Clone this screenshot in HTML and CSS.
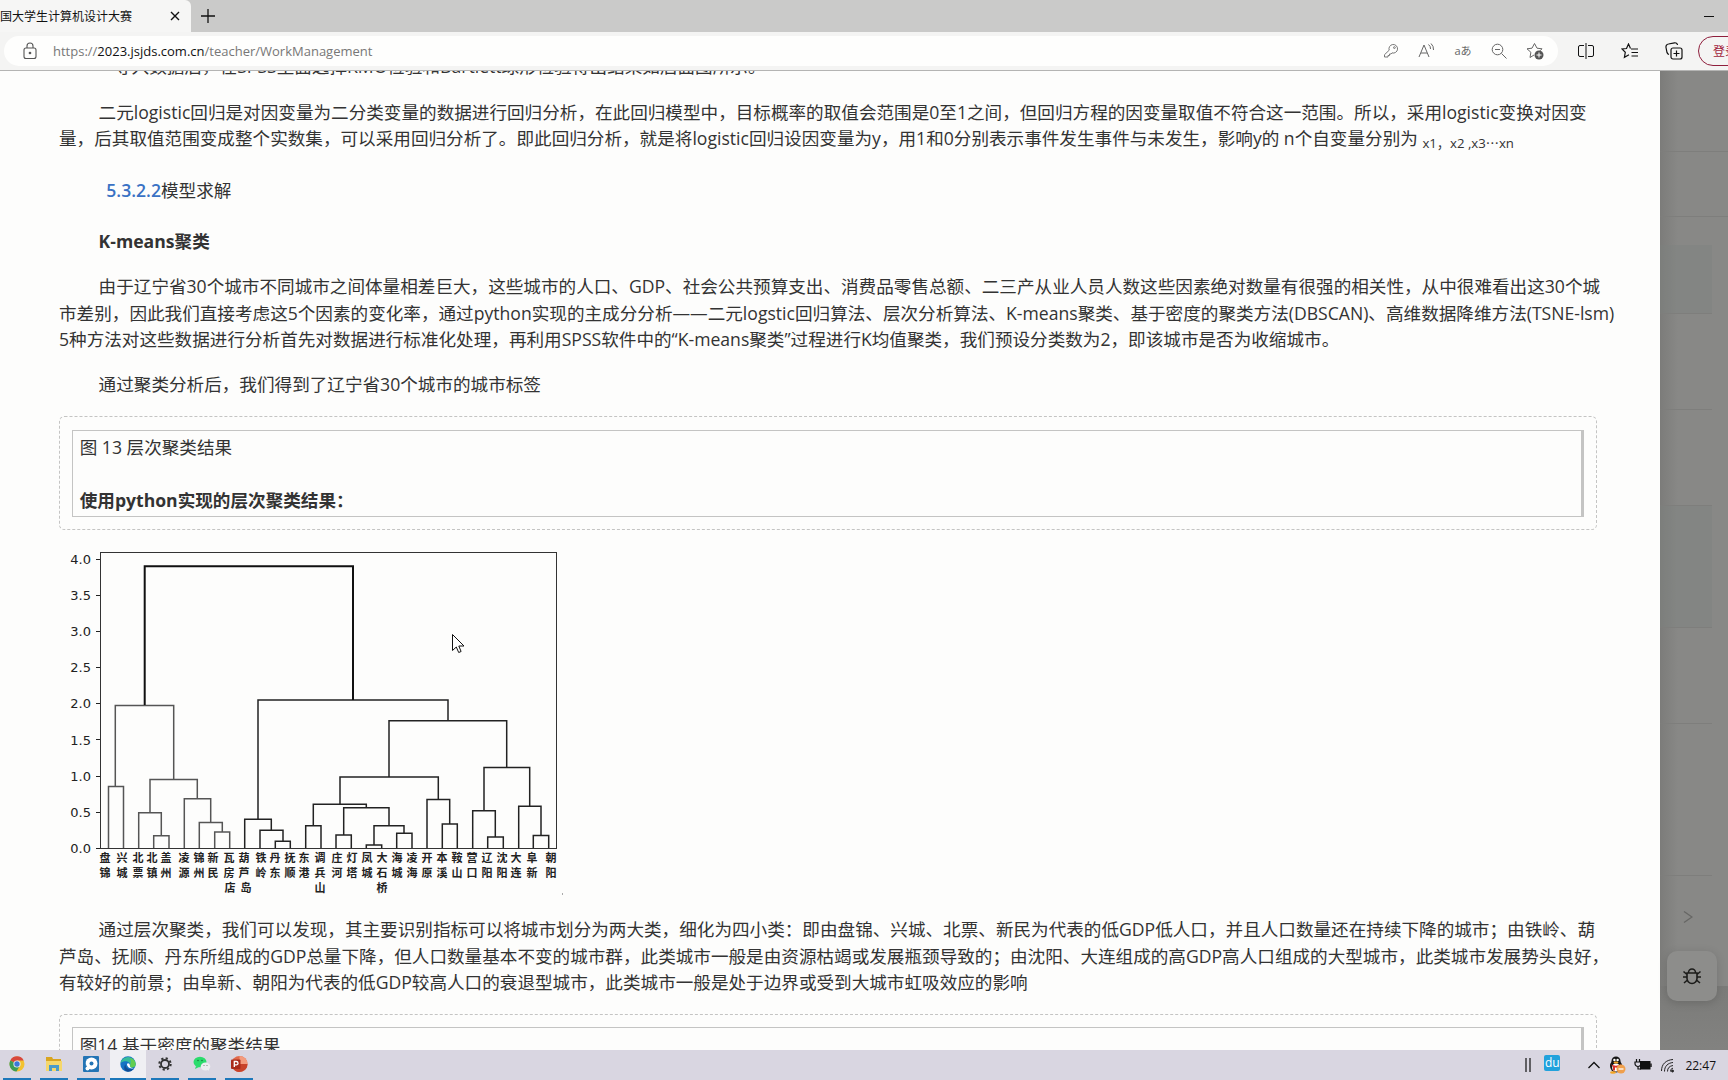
FILE: index.html
```html
<!DOCTYPE html>
<html lang="zh-CN">
<head>
<meta charset="utf-8">
<title>中国大学生计算机设计大赛</title>
<link rel="stylesheet" href="styles.css">
</head>
<body>
<header class="browser">
  <div class="tabs">
    <div class="tab"><span>国大学生计算机设计大赛</span>
      <button class="icon-btn" aria-label="关闭标签页"><svg width="10" height="10" viewBox="0 0 10 10"><path d="M1 1l8 8M9 1l-8 8" stroke="#111" stroke-width="1.4"/></svg></button>
    </div>
    <button class="icon-btn new-tab" aria-label="新建标签页"><svg width="14" height="14" viewBox="0 0 14 14"><path d="M7 0v14M0 7h14" stroke="#111" stroke-width="1.3"/></svg></button>
    <button class="icon-btn minimize" aria-label="最小化"><svg width="10" height="10" viewBox="0 0 10 10"><path d="M0 5.500h10" stroke="#111"/></svg></button>
  </div>
  <div class="toolbar">
    <div class="address">
      <svg class="lock" width="14" height="18" viewBox="0 0 14 18" fill="none" stroke="#555" stroke-width="1.1"><rect x="1" y="6" width="12" height="10.500" rx="2"/><path d="M4 6V4a3 3 0 0 1 6 0v2"/><circle cx="7" cy="11" r=".8" fill="#555"/></svg>
      <a class="url" href="#"><span>https://</span>2023.jsjds.com.cn<span>/teacher/WorkManagement</span></a>
      <div class="address-tools">
        <button class="icon-btn" aria-label="密码"><svg width="16" height="16" viewBox="0 0 16 16" fill="none" stroke="#777"><path d="M6.200 7.200A4.300 4.300 0 1 1 9 9.900L8 11H6.500v1.500H5V14H1.500v-2.300z"/><circle cx="11.400" cy="4.600" r=".9"/></svg></button>
        <button class="icon-btn" aria-label="朗读此页"><svg width="18" height="16" viewBox="0 0 18 16" fill="none" stroke="#666"><path d="M1 14L6 2l5 12M3 10h6M10.500 1.500a5 5 0 0 1 2 4.500M13 .5a8 8 0 0 1 2.500 6.500"/></svg></button>
        <button class="icon-btn translate" aria-label="翻译">aあ</button>
        <button class="icon-btn" aria-label="缩放"><svg width="16" height="16" viewBox="0 0 16 16" fill="none" stroke="#666"><circle cx="6.500" cy="6.500" r="5.300"/><path d="M10.500 10.500l5 5M4 6.500h5"/></svg></button>
        <button class="icon-btn" aria-label="收藏此页"><svg width="18" height="18" viewBox="0 0 18 18" fill="none" stroke="#666"><path d="M8 13l-4 2.500.9-5.200L1 6.800l5-.6L8.500 1.500 11 6.200l5 .6-2 2"/><circle cx="13" cy="13" r="4.500" fill="#555" stroke="none"/><path d="M13 10.500v5M10.500 13h5" stroke="#fff"/></svg></button>
      </div>
    </div>
    <div class="tools">
      <button class="icon-btn" aria-label="分屏"><svg width="16" height="16" viewBox="0 0 16 16" fill="none" stroke="#111"><path d="M6 2.500H2A1.500 1.500 0 0 0 .5 4v8A1.500 1.500 0 0 0 2 13.500h4M10 2.500h4A1.500 1.500 0 0 1 15.500 4v8a1.500 1.500 0 0 1-1.500 1.500h-4M8 0v16"/></svg></button>
      <button class="icon-btn" aria-label="收藏夹"><svg width="18" height="16" viewBox="0 0 18 16" fill="none" stroke="#111" stroke-width="1.200"><path d="M9.500 5.500L7.500 1 5.500 5.500 1 6l3.300 3.300-.9 5L8 11.800M10 6h7M10.500 9.500H17M10.500 13H17"/></svg></button>
      <button class="icon-btn" aria-label="集锦"><svg width="18" height="18" viewBox="0 0 18 18" fill="none" stroke="#111" stroke-width="1.200"><rect x="6" y="6" width="11" height="11" rx="2"/><path d="M11.500 8.500v6M8.500 11.500h6M4 12.500a3 3 0 0 1-2-2L1 5.500A3 3 0 0 1 3.500 2l6-1.200A2.500 2.500 0 0 1 12.500 3"/></svg></button>
    </div>
    <button class="login">登录</button>
  </div>
</header>

<main class="page">
  <article class="panel">
    <section class="doc doc-scrolled">
      <p class="deep">导入数据后，在SPSS里面选择KMO检验和Bartlett球形检验得出结果如后面图所示。</p>
      <p>二元logistic回归是对因变量为二分类变量的数据进行回归分析，在此回归模型中，目标概率的取值会范围是0至1之间，但回归方程的因变量取值不符合这一范围。所以，采用logistic变换对因变<br>量，后其取值范围变成整个实数集，可以采用回归分析了。即此回归分析，就是将logistic回归设因变量为y，用1和0分别表示事件发生事件与未发生，影响y的 n个自变量分别为 <sub>x1，x2 ,x3⋯xn</sub></p>
      <h2><a href="#">5.3.2.2</a>模型求解</h2>
      <h3>K-means聚类</h3>
      <p>由于辽宁省30个城市不同城市之间体量相差巨大，这些城市的人口、GDP、社会公共预算支出、消费品零售总额、二三产从业人员人数这些因素绝对数量有很强的相关性，从中很难看出这30个城<br>市差别，因此我们直接考虑这5个因素的变化率，通过python实现的主成分分析——二元logstic回归算法、层次分析算法、K-means聚类、基于密度的聚类方法(DBSCAN)、高维数据降维方法(TSNE-lsm)<br>5种方法对这些数据进行分析首先对数据进行标准化处理，再利用SPSS软件中的“K-means聚类”过程进行K均值聚类，我们预设分类数为2，即该城市是否为收缩城市。</p>
      <p>通过聚类分析后，我们得到了辽宁省30个城市的城市标签</p>
      <div class="frame"><div class="frame-cell"><div>图 13 层次聚类结果</div><strong>使用python实现的层次聚类结果：</strong></div></div>
    </section>

    <figure class="chart">
      <svg width="510" height="369" viewBox="59 531 510 369" role="img" aria-label="层次聚类树状图">
        <rect x="100.500" y="553.500" width="456" height="296" fill="none" stroke="#333"/>
        <path d="M96 560.500h4M96 596.500h4M96 632.500h4M96 668.500h4M96 704.500h4M96 740.500h4M96 777.500h4M96 813.500h4M96 849.500h4" stroke="#222"/>
        <g class="axis" text-anchor="end">
          <text x="91" y="565">4.0</text><text x="91" y="601">3.5</text><text x="91" y="637">3.0</text><text x="91" y="673">2.5</text><text x="91" y="709">2.0</text><text x="91" y="746">1.5</text><text x="91" y="782">1.0</text><text x="91" y="818">0.5</text><text x="91" y="854">0.0</text>
        </g>
        <path fill="none" stroke="#555" stroke-width="1.500" d="M115.300 787.300V706.500H173.700V780.300M108.500 849V787.500H123.500V849M150 813.700V780.500H197.300V799.700M138.700 849V813.700H161.300V836.700M153.700 849V836.700H169V849M184.300 849V799.700H210.700V823.300M199.300 849V823.500H222.300V833M214.700 849V833H229.700V849"/>
        <path fill="none" stroke="#222" stroke-width="1.500" d="M258 820V701H448V721.700M244.700 849V820.300H271.300V831.300M260 849V831.300H283V842.300M275.300 849V842.300H290.300V849M389 778V721.700H506.700V768.300M340 805V778H438.300V800.500M313.300 826.700V805.300H366.300V808.700M305.700 849V826.700H321V849M343.700 835.700V808.700H389V826.700M336 849V836H351.300V849M374 846V826.700H404V834.300M366.300 849V846H381.700V849M396.700 849V834.300H412V849M427 849V800.500H449.700V825M442.300 849V825H457.300V849M484 811.700V768.500H529.700V807.300M472.700 849V811.700H495.300V838M487.700 849V838H503.300V849M518.700 849V807.300H541V836.500M533.300 849V836.500H548.700V849"/>
        <path fill="none" stroke="#111" stroke-width="2" d="M144.700 706V567.300H353V701"/>
        <g class="cities" text-anchor="middle">
          <text y="863"><tspan x="105">盘</tspan><tspan x="122">兴</tspan><tspan x="138">北</tspan><tspan x="152">北</tspan><tspan x="166">盖</tspan><tspan x="184">凌</tspan><tspan x="199">锦</tspan><tspan x="213">新</tspan><tspan x="229">瓦</tspan><tspan x="244">葫</tspan><tspan x="261">铁</tspan><tspan x="275">丹</tspan><tspan x="290">抚</tspan><tspan x="304">东</tspan><tspan x="320">调</tspan><tspan x="337">庄</tspan><tspan x="352">灯</tspan><tspan x="367">凤</tspan><tspan x="382">大</tspan><tspan x="397">海</tspan><tspan x="412">凌</tspan><tspan x="427">开</tspan><tspan x="442">本</tspan><tspan x="457">鞍</tspan><tspan x="472">营</tspan><tspan x="487">辽</tspan><tspan x="502">沈</tspan><tspan x="516">大</tspan><tspan x="532">阜</tspan><tspan x="551">朝</tspan></text>
          <text y="878"><tspan x="105">锦</tspan><tspan x="122">城</tspan><tspan x="138">票</tspan><tspan x="152">镇</tspan><tspan x="166">州</tspan><tspan x="184">源</tspan><tspan x="199">州</tspan><tspan x="213">民</tspan><tspan x="229">房</tspan><tspan x="244">芦</tspan><tspan x="261">岭</tspan><tspan x="275">东</tspan><tspan x="290">顺</tspan><tspan x="304">港</tspan><tspan x="320">兵</tspan><tspan x="337">河</tspan><tspan x="352">塔</tspan><tspan x="367">城</tspan><tspan x="382">石</tspan><tspan x="397">城</tspan><tspan x="412">海</tspan><tspan x="427">原</tspan><tspan x="442">溪</tspan><tspan x="457">山</tspan><tspan x="472">口</tspan><tspan x="487">阳</tspan><tspan x="502">阳</tspan><tspan x="516">连</tspan><tspan x="532">新</tspan><tspan x="551">阳</tspan></text>
          <text y="893"><tspan x="230">店</tspan><tspan x="246">岛</tspan><tspan x="320">山</tspan><tspan x="382">桥</tspan></text>
        </g>
        <path d="M452.500 635.500v16l3.800-3.500 2.400 5.500 2.400-1-2.300-5.500h5.200z" fill="#fff" stroke="#111"/>
        <path d="M562.500 894v2" stroke="#aaa"/>
      </svg>
    </figure>

    <section class="doc">
      <p>通过层次聚类，我们可以发现，其主要识别指标可以将城市划分为两大类，细化为四小类：即由盘锦、兴城、北票、新民为代表的低GDP低人口，并且人口数量还在持续下降的城市；由铁岭、葫<br>芦岛、抚顺、丹东所组成的GDP总量下降，但人口数量基本不变的城市群，此类城市一般是由资源枯竭或发展瓶颈导致的；由沈阳、大连组成的高GDP高人口组成的大型城市，此类城市发展势头良好，<br>有较好的前景；由阜新、朝阳为代表的低GDP较高人口的衰退型城市，此类城市一般是处于边界或受到大城市虹吸效应的影响</p>
      <div class="frame"><div class="frame-cell"><div>图14 基于密度的聚类结果</div></div></div>
    </section>
  </article>

  <aside class="backdrop">
    <div class="row r80 full"></div>
    <div class="row r65 full"></div>
    <div class="row r29 bare"></div>
    <div class="row r69 tint"></div>
    <div class="row r96"></div>
    <div class="row r96"></div>
    <div class="row r122 tint"></div>
    <div class="row r96"></div>
    <div class="row r152"></div>
    <div class="row pager"><button class="icon-btn" aria-label="下一页"><svg width="10" height="14" viewBox="0 0 10 14" fill="none" stroke="#666664" stroke-width="1.300"><path d="M1 1.500l8 5.500-8 5.500"/></svg></button></div>
    <div class="rest"></div>
    <button class="bug" aria-label="反馈问题"><svg width="20" height="20" viewBox="0 0 20 20" fill="none" stroke="#1c1c1a" stroke-width="1.600"><path d="M5 7h10v5.500a5 5 0 0 1-10 0zM6.500 6.500a3.500 3.500 0 0 1 7 0M5 8.500L1.500 5.500M15 8.500l3.500-3M5 11H1M15 11h4M5.500 14L2 17M14.500 14l3.500 3"/></svg></button>
  </aside>
</main>

<footer class="taskbar">
  <nav class="apps">
    <button class="app" aria-label="Chrome"><svg width="16" height="16" viewBox="0 0 16 16"><circle cx="8" cy="8" r="7.500" fill="#f2c230"/><path d="M8 8L1.300 4.500A7.500 7.500 0 0 1 14.700 4.500H8z" fill="#d8483c"/><path d="M8 8L1.300 4.500A7.500 7.500 0 0 0 7.500 15.500L11 9.500z" fill="#3d9d55"/><circle cx="8" cy="8" r="3.600" fill="#eee"/><circle cx="8" cy="8" r="2.700" fill="#3b78d8"/></svg></button>
    <button class="app" aria-label="文件资源管理器"><svg width="18" height="16" viewBox="0 0 18 16"><path d="M1 1h6l1 2h8v12H1z" fill="#d9a520"/><path d="M1 5h16v10H1z" fill="#f5d76b"/><path d="M4 15V9h10v6h-3v-3H7v3z" fill="#4a9bc9"/></svg></button>
    <button class="app" aria-label="录屏"><svg width="16" height="16" viewBox="0 0 16 16"><rect width="16" height="16" rx="1" fill="#2374b5"/><circle cx="8.500" cy="7.500" r="6" fill="#fff"/><path d="M2 5l1.500 5L6 14l-3 .5z" fill="#2374b5"/><circle cx="8.500" cy="7.500" r="2" fill="#2374b5"/><circle cx="4.500" cy="12.500" r="2" fill="#fff"/></svg></button>
    <button class="app active" aria-label="Edge"><svg width="16" height="16" viewBox="0 0 16 16"><circle cx="8" cy="8" r="7.700" fill="#1673c4"/><path d="M.5 7A7.700 7.700 0 0 1 15.700 8c0 2.500-2 3.500-4 3.500-1.500 0-2-.8-1.500-2C11 6 5 3.500.5 7z" fill="#37bd9a"/><path d="M10 2a7 7 0 0 1 5.700 6c0 2.500-2 3.500-4 3.500-1.500 0-2-.8-1.500-2 1-3 1-5.500-.2-7.500z" fill="#62cd4f"/><path d="M5.500 8.500c0 4 4 6 8.500 4A7.700 7.700 0 0 1 8 15.700C3 15 4 9.500 5.500 8.500z" fill="#124d94"/><path d="M7 8c0 3.500 4 5.500 7.500 3.800-1 .6-5 .3-4.600-2.300C10 7 7.500 6.500 7 8z" fill="#fff"/></svg></button>
    <button class="app" aria-label="设置"><svg width="16" height="16" viewBox="0 0 16 16" fill="none" stroke="#333"><circle cx="8" cy="8" r="4" stroke-width="1.800"/><circle cx="8" cy="8" r="5.700" stroke-width="2" stroke-dasharray="2.200 2.270"/></svg></button>
    <button class="app" aria-label="微信"><svg width="18" height="16" viewBox="0 0 18 16"><ellipse cx="7" cy="6" rx="6.500" ry="5.300" fill="#2bdc6c"/><path d="M3 10l-1 3 4-2z" fill="#2bdc6c"/><ellipse cx="12.500" cy="10.500" rx="4.800" ry="4" fill="#eceef0"/><path d="M14 13l2 2v-3z" fill="#eceef0"/><circle cx="5" cy="4.500" r=".8" fill="#187a3c"/><circle cx="9" cy="4.500" r=".8" fill="#187a3c"/><circle cx="11" cy="9.500" r=".6" fill="#777"/><circle cx="14" cy="9.500" r=".6" fill="#777"/></svg></button>
    <button class="app" aria-label="PowerPoint"><svg width="18" height="18" viewBox="0 0 18 18"><circle cx="9.500" cy="9" r="8" fill="#e0684b"/><path d="M9.500 1a8 8 0 0 1 8 8h-8z" fill="#f39b7d"/><path d="M3 13.500a8 8 0 0 0 14.500-4.500H9.500z" fill="#c8432a"/><rect x="1" y="4.500" width="9.500" height="9.500" rx="1" fill="#a92b1a"/><path d="M4.300 12V6.500h2a1.600 1.600 0 0 1 0 3.400h-2" fill="none" stroke="#fff" stroke-width="1.300"/></svg></button>
  </nav>
  <div class="tray">
    <svg width="6" height="14" viewBox="0 0 6 14"><path d="M1 0v14M5 0v14" stroke="#111" stroke-width="1.200"/></svg>
    <button class="du">du</button>
    <svg class="up" width="12" height="8" viewBox="0 0 12 8" fill="none" stroke="#111" stroke-width="1.300"><path d="M.5 7L6 1.500 11.500 7"/></svg>
    <svg width="18" height="18" viewBox="0 0 18 18"><ellipse cx="8" cy="10" rx="6" ry="6.500" fill="#151515"/><circle cx="8" cy="5" r="4.500" fill="#151515"/><ellipse cx="8" cy="11.500" rx="3.800" ry="4" fill="#fff"/><circle cx="6.400" cy="4" r="1.200" fill="#fff"/><circle cx="9.600" cy="4" r="1.200" fill="#fff"/><ellipse cx="8" cy="6.500" rx="2.500" ry="1" fill="#f5a623"/><path d="M3 8.500c3 1.500 7 1.500 10 0v2c-3 1.300-5 1.300-6 1v3H5v-3.500z" fill="#d8302a"/><ellipse cx="5" cy="16.500" rx="3" ry="1.300" fill="#f5a623"/><circle cx="13" cy="13" r="4.500" fill="#f0a04c"/><path d="M10.500 13h5" stroke="#fff" stroke-width="1.300"/></svg>
    <svg width="18" height="14" viewBox="0 0 18 14"><rect x="6.500" y="3.500" width="9.500" height="7.500" fill="#111" stroke="#111"/><path d="M17 5.500v3.500" stroke="#111" stroke-width="1.400"/><path d="M2.500 1v3M5.500 1v3M1 4h6v1.500a3 3 0 0 1-6 0zM4 8v3h3" fill="none" stroke="#111" stroke-width="1.200"/></svg>
    <svg width="16" height="16" viewBox="0 0 16 16" fill="none" stroke="#222"><path d="M1.500 14C1.500 7 6 3 13 2.500M4.500 14.500C4.500 9 8 6 13 5.500M7.500 14.500C7.500 11 9.500 9 13 8.500M10.500 14.500c0-2 .8-3 2.500-3.300"/><circle cx="12.500" cy="14" r="1" fill="#222"/></svg>
    <time>22:47</time>
  </div>
</footer>
</body>
</html>
```
FILE: styles.css
```css
* { box-sizing: border-box; }
body {
  margin: 0;
  height: 100vh;
  display: flex;
  flex-direction: column;
  overflow: hidden;
  background: #fdfdfc;
  color: #333;
  font-family: "Open Sans", "Noto Sans CJK SC", sans-serif;
}
button { font: inherit; border: 0; padding: 0; background: none; }
svg { display: block; flex: none; }
.icon-btn { display: flex; align-items: center; justify-content: center; color: #666; white-space: nowrap; }

/* browser chrome */
.browser { flex: none; border-bottom: 1px solid #b4b4b3; }
.tabs { display: flex; height: 32px; background: #cacac9; align-items: center; }
.tab {
  display: flex; align-items: center; justify-content: space-between;
  width: 191px; height: 32px; padding-right: 11px;
  background: #f6f6f5; color: #111; font-size: 12px; white-space: nowrap;
  border-radius: 0 6px 0 0;
}
.new-tab { margin-left: 10px; }
.minimize { margin-left: auto; margin-right: 14px; }
.toolbar { display: flex; align-items: center; height: 38px; background: #f4f4f3; padding-left: 4px; overflow: hidden; }
.address {
  flex: 1; display: flex; align-items: center; height: 30px;
  padding: 0 14px 0 19px; border-radius: 15px; background: #fefefd;
}
.url { margin-left: 16px; font-size: 13px; color: #111; text-decoration: none; }
.url span { color: #777; }
.address-tools { display: flex; gap: 18px; margin-left: auto; }
.address-tools .icon-btn { width: 18px; }
.address-tools .translate { font-size: 11px; line-height: 16px; }
.tools { display: flex; gap: 26px; margin: 0 15px 0 19px; }
.tools .icon-btn { width: 18px; }
.login {
  flex: none; width: 64px; height: 30px; margin-right: -34px; padding-left: 14px; text-align: left;
  border: 1px solid #8f1f3c; border-radius: 15px; color: #a01c3c; font-size: 12px;
}

/* document */
.page { flex: 1; min-height: 0; display: flex; overflow: hidden; }
.panel { flex: 1; min-width: 0; padding: 0 63px 0 59px; overflow: hidden; }
/* the document is read at 110% */
.doc { zoom: 1.1; font-size: 16px; line-height: 24px; white-space: nowrap; }
.doc-scrolled { margin-top: -16px; }
.doc p { margin: 0 0 17px; text-indent: 36px; }
.doc .deep { text-indent: 50px; }
.doc sub { font-size: 12px; line-height: 1; vertical-align: -3px; }
.doc h2 { margin: 23px 0; font-size: 16px; font-weight: 400; text-indent: 43px; }
.doc h2 a { color: #3a72c4; font-weight: 600; text-decoration: none; }
.doc h3 { margin: 0 0 17px; font-size: 16px; font-weight: 700; text-indent: 36px; }
.frame { padding: 11px; border: 1px dashed #c4c4c3; border-radius: 5px; }
.frame-cell {
  display: flex; flex-direction: column; gap: 24px; padding: 3px 6px;
  border: 1px solid #c4c4c3; border-right-width: 3px;
}
.chart { margin: 0 0 17px; }
.axis { font-family: "DejaVu Sans", sans-serif; font-size: 13px; fill: #222; }
.cities { font-family: "Noto Sans CJK SC", sans-serif; font-size: 11px; font-weight: 700; fill: #222; }

/* dimmed page behind the panel */
.backdrop {
  flex: none; width: 68px; display: flex; flex-direction: column; position: relative;
  background: linear-gradient(90deg, #7c7c7a, #888886 18px);
}
.row { flex: none; margin-right: 16px; border-bottom: 1px solid #7e7e7c; }
.full { margin-right: 0; }
.bare { border: 0; }
.tint { background: #7c838066; }
.r80 { height: 81px; }
.r65 { height: 65px; }
.r29 { height: 28px; }
.r69 { height: 69px; }
.r96 { height: 96px; }
.r122 { height: 122px; }
.r152 { height: 152px; }
.pager { height: 110px; border: 0; display: flex; justify-content: center; align-items: flex-start; padding: 34px 0 0 4px; }
.rest { flex: 1; background: linear-gradient(#7b7b79, #828280); }
.bug {
  position: absolute; right: 11px; bottom: 49px; width: 50px; height: 50px;
  display: flex; align-items: center; justify-content: center;
  border-radius: 10px; background: #8d8d8b; box-shadow: 0 2px 10px #00000026;
}

/* taskbar */
.taskbar { flex: none; height: 30px; display: flex; justify-content: space-between; background: #d9d6e1; }
.apps { display: flex; gap: 9px; padding-left: 3px; }
.app { width: 28px; height: 30px; display: flex; align-items: center; justify-content: center; border-bottom: 2px solid #1d78ba; }
.active { width: 36px; margin: 0 -4px; background: #efeff3; }
.tray { display: flex; align-items: center; padding-right: 12px; }
.du { width: 16px; height: 16px; margin: 0 28px 4px 13px; border-radius: 2px; background: #22a2dc; color: #fff; font-size: 12px; line-height: 14px; }
.tray .up { margin-right: 8px; }
.tray svg + svg { margin-right: 8px; }
.tray time { font-size: 12px; color: #111; margin-left: 1px; }
```
